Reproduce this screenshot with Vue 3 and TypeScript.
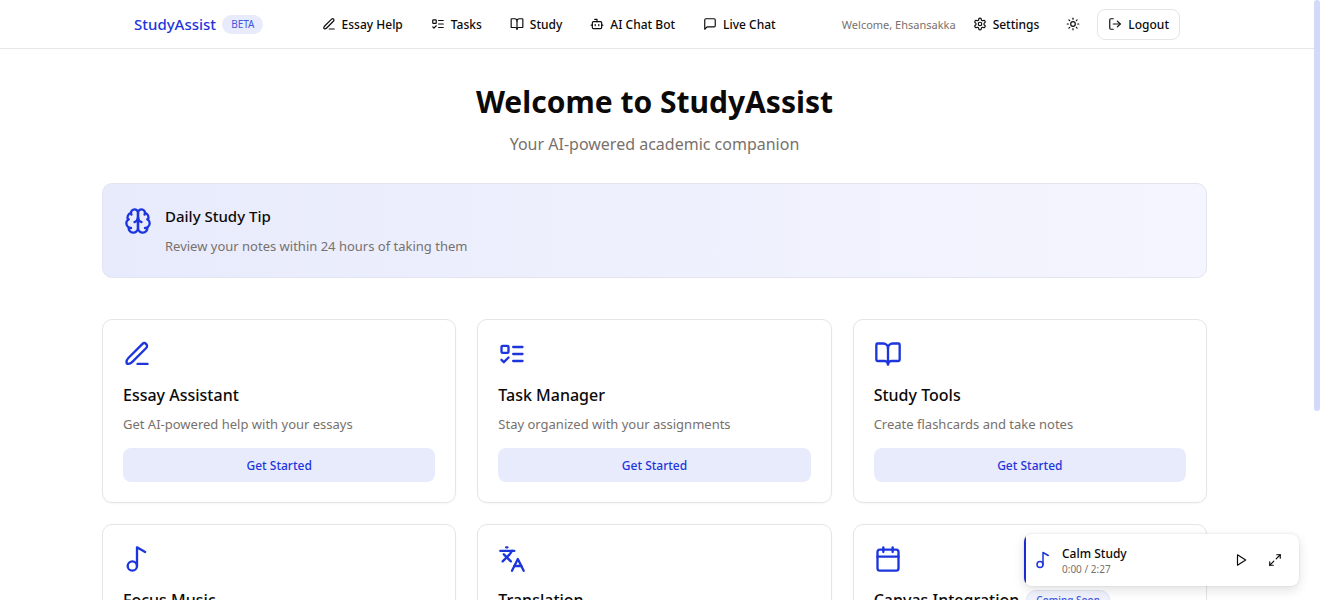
<script setup lang="ts">
import { h, type FunctionalComponent } from 'vue'

const paths: Record<string, string[]> = {
  pen: ['M12.5 20.5H21', 'M16.5 3.5a2.12 2.12 0 0 1 3.4 3.4L8 18.8q-1.6 1.6-3.6 1.6-1.4 0-1.4-1.4 0-2 1.6-3.6z'],
  tasks: ['M4 5h4a1 1 0 0 1 1 1v4a1 1 0 0 1-1 1H4a1 1 0 0 1-1-1V6a1 1 0 0 1 1-1z', 'm3 17 2 2 4-4', 'M13 6h8', 'M13 12h8', 'M13 18h8'],
  book: ['M12 7v14', 'M3 18a1 1 0 0 1-1-1V4a1 1 0 0 1 1-1h5a4 4 0 0 1 4 4 4 4 0 0 1 4-4h5a1 1 0 0 1 1 1v13a1 1 0 0 1-1 1h-6a3 3 0 0 0-3 3 3 3 0 0 0-3-3z'],
  bot: ['M12 8V4H8', 'M6 8h12a2 2 0 0 1 2 2v8a2 2 0 0 1-2 2H6a2 2 0 0 1-2-2v-8a2 2 0 0 1 2-2z', 'M2 14h2', 'M20 14h2', 'M15 13v2', 'M9 13v2'],
  chat: ['M21 15a2 2 0 0 1-2 2H7l-4 4V5a2 2 0 0 1 2-2h14a2 2 0 0 1 2 2z'],
  gear: ['M12.22 2h-.44a2 2 0 0 0-2 2v.18a2 2 0 0 1-1 1.73l-.43.25a2 2 0 0 1-2 0l-.15-.08a2 2 0 0 0-2.73.73l-.22.38a2 2 0 0 0 .73 2.73l.15.1a2 2 0 0 1 1 1.72v.51a2 2 0 0 1-1 1.74l-.15.09a2 2 0 0 0-.73 2.73l.22.38a2 2 0 0 0 2.73.73l.15-.08a2 2 0 0 1 2 0l.43.25a2 2 0 0 1 1 1.73V20a2 2 0 0 0 2 2h.44a2 2 0 0 0 2-2v-.18a2 2 0 0 1 1-1.73l.43-.25a2 2 0 0 1 2 0l.15.08a2 2 0 0 0 2.73-.73l.22-.39a2 2 0 0 0-.73-2.73l-.15-.08a2 2 0 0 1-1-1.74v-.5a2 2 0 0 1 1-1.74l.15-.09a2 2 0 0 0 .73-2.73l-.22-.38a2 2 0 0 0-2.73-.73l-.15.08a2 2 0 0 1-2 0l-.43-.25a2 2 0 0 1-1-1.73V4a2 2 0 0 0-2-2z', 'M15 12a3 3 0 1 1-6 0 3 3 0 0 1 6 0z'],
  sun: ['M16 12a4 4 0 1 1-8 0 4 4 0 0 1 8 0z', 'M12 2v2', 'M12 20v2', 'm4.93 4.93 1.41 1.41', 'm17.66 17.66 1.41 1.41', 'M2 12h2', 'M20 12h2', 'm6.34 17.66-1.41 1.41', 'm19.07 4.93-1.41 1.41'],
  logout: ['M9 21H5a2 2 0 0 1-2-2V5a2 2 0 0 1 2-2h4', 'm16 17 5-5-5-5', 'M21 12H9'],
  brain: ['M12 5a3 3 0 1 0-5.997.125 4 4 0 0 0-2.526 5.77 4 4 0 0 0 .556 6.588A4 4 0 1 0 12 18Z', 'M12 5a3 3 0 1 1 5.997.125 4 4 0 0 1 2.526 5.77 4 4 0 0 1-.556 6.588A4 4 0 1 1 12 18Z', 'M15 13a4.5 4.5 0 0 1-3-4 4.5 4.5 0 0 1-3 4', 'M17.599 6.5a3 3 0 0 0 .399-1.375', 'M6.003 5.125A3 3 0 0 0 6.401 6.5', 'M3.477 10.896a4 4 0 0 1 .585-.396', 'M19.938 10.5a4 4 0 0 1 .585.396', 'M6 18a4 4 0 0 1-1.967-.516', 'M19.967 17.484A4 4 0 0 1 18 18'],
  music: ['M12 18a4 4 0 1 1-8 0 4 4 0 0 1 8 0z', 'M12 18V2l7 4'],
  languages: ['m5 8 6 6', 'm4 14 6-6 2-3', 'M2 5h12', 'M7 2h1', 'm22 22-5-10-5 10', 'M14 18h6'],
  calendar: ['M8 2v4', 'M16 2v4', 'M5 4h14a2 2 0 0 1 2 2v14a2 2 0 0 1-2 2H5a2 2 0 0 1-2-2V6a2 2 0 0 1 2-2z', 'M3 10h18'],
  play: ['M6 3l14 9-14 9z'],
  expand: ['M15 3h6v6', 'M9 21H3v-6', 'M21 3l-7 7', 'M3 21l7-7'],
}

const Icon: FunctionalComponent<{ name: string }> = (props) =>
  h(
    'svg',
    {
      viewBox: '0 0 24 24',
      fill: 'none',
      stroke: 'currentColor',
      'stroke-width': 2,
      'stroke-linecap': 'round',
      'stroke-linejoin': 'round',
      'aria-hidden': 'true',
    },
    (paths[props.name] ?? []).map((d) => h('path', { d })),
  )
Icon.props = ['name']

const nav = [
  { icon: 'pen', label: 'Essay Help' },
  { icon: 'tasks', label: 'Tasks' },
  { icon: 'book', label: 'Study' },
  { icon: 'bot', label: 'AI Chat Bot' },
  { icon: 'chat', label: 'Live Chat' },
]

interface Feature {
  icon: string
  title: string
  text?: string
  badge?: string
}

const features: Feature[] = [
  { icon: 'pen', title: 'Essay Assistant', text: 'Get AI-powered help with your essays' },
  { icon: 'tasks', title: 'Task Manager', text: 'Stay organized with your assignments' },
  { icon: 'book', title: 'Study Tools', text: 'Create flashcards and take notes' },
  { icon: 'music', title: 'Focus Music' },
  { icon: 'languages', title: 'Translation' },
  { icon: 'calendar', title: 'Canvas Integration', badge: 'Coming Soon' },
]
</script>

<template>
  <div class="page">
    <header class="topbar">
      <div class="topbar-inner">
        <div class="brand">
          <a class="logo" href="#">StudyAssist</a>
          <span class="beta">BETA</span>
        </div>
        <nav class="nav">
          <a v-for="item in nav" :key="item.label" class="action" href="#">
            <Icon :name="item.icon" class="icon-sm" />{{ item.label }}
          </a>
        </nav>
        <div class="account">
          <span class="greeting">Welcome, Ehsansakka</span>
          <a class="action settings" href="#"><Icon name="gear" class="icon-sm" />Settings</a>
          <button class="theme" type="button" aria-label="Toggle theme"><Icon name="sun" class="icon-sm" /></button>
          <button class="action logout" type="button"><Icon name="logout" class="icon-sm" />Logout</button>
        </div>
      </div>
    </header>

    <main class="main">
      <h1>Welcome to StudyAssist</h1>
      <p class="lead">Your AI-powered academic companion</p>

      <section class="tip">
        <Icon name="brain" class="icon-lg" />
        <div>
          <h2>Daily Study Tip</h2>
          <p>Review your notes within 24 hours of taking them</p>
        </div>
      </section>

      <section class="grid">
        <article v-for="f in features" :key="f.title" class="card">
          <Icon :name="f.icon" class="icon-lg" />
          <h3>{{ f.title }}<span v-if="f.badge" class="soon">{{ f.badge }}</span></h3>
          <template v-if="f.text">
            <p>{{ f.text }}</p>
            <button type="button" class="start">Get Started</button>
          </template>
        </article>
      </section>
    </main>

    <aside class="player">
      <Icon name="music" class="note" />
      <div class="track">
        <strong>Calm Study</strong>
        <span>0:00 / 2:27</span>
      </div>
      <button type="button" aria-label="Play"><Icon name="play" class="icon-sm" /></button>
      <button type="button" aria-label="Expand player"><Icon name="expand" class="icon-sm" /></button>
    </aside>

    <div class="scroll-thumb"></div>
  </div>
</template>

<style>
body {
  margin: 0;
  background: #fff;
}
</style>

<style scoped>
.page {
  position: relative;
  height: 100vh;
  overflow: hidden;
  padding-right: 6px;
  box-sizing: border-box;
  font-family: "Noto Sans", "Open Sans", sans-serif;
  font-size: 14px;
  color: #0c0a09;
}
h1, h2, h3, p {
  margin: 0;
}
a {
  color: inherit;
  text-decoration: none;
}
button {
  font: inherit;
  color: inherit;
  background: none;
  border: 0;
  padding: 0;
  cursor: pointer;
}
svg {
  display: block;
  flex: none;
}
.icon-sm {
  width: 14px;
  height: 14px;
}
.icon-lg {
  width: 28px;
  height: 28px;
  color: #1d35dc;
}
.topbar {
  border-bottom: 1px solid #e5e7eb;
}
.topbar-inner {
  max-width: 1046px;
  height: 48px;
  margin: 0 auto;
  display: flex;
  align-items: center;
  justify-content: space-between;
}
.brand {
  display: flex;
  align-items: center;
  gap: 6px;
}
.logo {
  font-size: 15px;
  font-weight: 500;
  color: #1d35dc;
}
.beta {
  padding: 0 9px;
  border-radius: 10px;
  background: #e8ebfc;
  color: #4257dd;
  font-size: 10px;
  line-height: 19px;
}
.nav {
  display: flex;
  gap: 28px;
  margin-right: 8px;
}
.action {
  display: flex;
  align-items: center;
  gap: 6px;
  font-size: 12px;
  font-weight: 500;
  white-space: nowrap;
}
.account {
  display: flex;
  align-items: center;
}
.greeting {
  font-size: 11px;
  color: #78716c;
}
.settings {
  margin-left: 17px;
}
.theme {
  margin: 0 17px 0 27px;
}
.logout {
  height: 31px;
  padding: 0 10px;
  border: 1px solid #e7e5e4;
  border-radius: 8px;
}
.main {
  max-width: 1105px;
  margin: 0 auto;
  padding: 32px 5px 0 0;
}
h1 {
  font-size: 30px;
  line-height: 42px;
  font-weight: 700;
  text-align: center;
}
.lead {
  margin-top: 8px;
  font-size: 16px;
  line-height: 26px;
  color: #78716c;
  text-align: center;
}
.tip {
  display: flex;
  gap: 13px;
  margin-top: 26px;
  padding: 20px 21px;
  border: 1px solid #e2e4f0;
  border-radius: 10px;
  background: linear-gradient(90deg, #e8ebfc, #f4f5fe);
}
.tip .icon-lg {
  margin-top: 3px;
}
.tip h2 {
  font-size: 15px;
  line-height: 24px;
  font-weight: 500;
}
.tip p {
  margin-top: 8px;
  font-size: 13px;
  line-height: 21px;
  color: #78716c;
}
.grid {
  display: grid;
  grid-template-columns: repeat(3, 1fr);
  gap: 21px;
  margin-top: 41px;
}
.card {
  padding: 20px;
  border: 1px solid #e7e5e4;
  border-radius: 10px;
  box-shadow: 0 1px 2px rgba(0, 0, 0, 0.04);
}
.card h3 {
  display: flex;
  align-items: center;
  gap: 7px;
  margin-top: 14px;
  font-size: 16px;
  line-height: 26px;
  font-weight: 500;
}
.card p {
  margin-top: 6px;
  font-size: 13px;
  line-height: 21px;
  color: #78716c;
}
.start {
  width: 100%;
  height: 34px;
  margin-top: 13px;
  border-radius: 8px;
  background: #e8ebfc;
  color: #1d35dc;
  font-size: 12px;
  font-weight: 500;
}
.soon {
  padding: 0 9px;
  border: 1px solid #e2e4f0;
  border-radius: 10px;
  background: #f0f2fd;
  color: #4257dd;
  font-size: 10px;
  line-height: 18px;
}
.player {
  position: absolute;
  right: 21px;
  bottom: 14px;
  width: 275px;
  height: 52px;
  box-sizing: border-box;
  display: flex;
  align-items: center;
  gap: 20px;
  padding: 0 17px 0 10px;
  border-radius: 8px;
  background: linear-gradient(#1a2bcf, #1a2bcf) left / 2px 100% no-repeat, #fff;
  box-shadow: 0 4px 12px rgba(0, 0, 0, 0.12), 0 0 2px rgba(0, 0, 0, 0.12);
}
.note {
  width: 18px;
  height: 18px;
  color: #1d35dc;
}
.track {
  flex: 1;
  margin-left: -10px;
}
.track strong {
  display: block;
  font-size: 12px;
  line-height: 17px;
  font-weight: 500;
}
.track span {
  display: block;
  font-size: 10px;
  line-height: 14px;
  color: #78716c;
}
.scroll-thumb {
  position: absolute;
  top: 0;
  right: 0;
  width: 6px;
  height: 68.5%;
  border-radius: 3px;
  background: #d3d9fb;
}
</style>
